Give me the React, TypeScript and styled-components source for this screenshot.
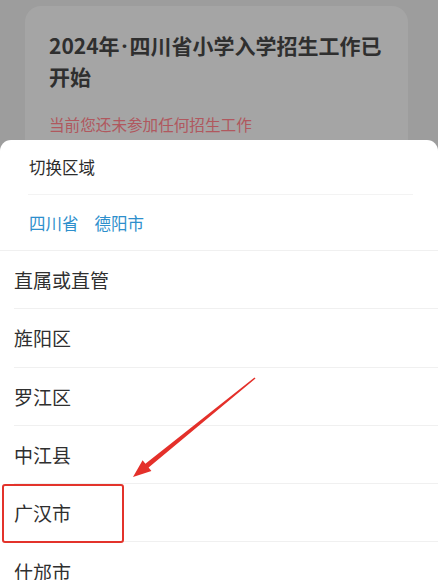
import React from "react";
import styled, { createGlobalStyle } from "styled-components";

const Global = createGlobalStyle`
  html, body { margin: 0; padding: 0; }
  body { font-family: "Noto Sans CJK SC", "Noto Sans", sans-serif; }
  * { box-sizing: border-box; }
`;

const Page = styled.div`
  position: relative;
  width: 438px;
  height: 580px;
  overflow: hidden;
  background: #9d9d9d;
  padding: 6px 30px 0 25px;
`;

const Card = styled.div`
  background: #a5a5a5;
  border-radius: 16px;
  padding: 24px 10px 20px 24px;
  height: 200px;
`;

const CardTitle = styled.h1`
  margin: 0;
  font-size: 21px;
  line-height: 30px;
  font-weight: 700;
  color: #2f2f2f;
  white-space: nowrap;
`;

const Dot = styled.span`
  font-family: "Noto Sans", sans-serif;
  padding: 0 2px;
`;

const CardNote = styled.p`
  margin: 21px 0 0;
  font-size: 15.6px;
  line-height: 24px;
  color: #b0585e;
  white-space: nowrap;
`;

const Sheet = styled.div`
  position: absolute;
  top: 140px;
  left: 0;
  right: 0;
  bottom: 0;
  background: #ffffff;
  border-radius: 11px 11px 0 0;
  display: flex;
  flex-direction: column;
`;

const SheetHead = styled.div`
  padding: 0 25px 0 28px;
  border-bottom: 1px solid #f0f0f0;
`;

const SheetTitle = styled.div`
  height: 55px;
  display: flex;
  align-items: center;
  padding-left: 1px;
  font-size: 16.5px;
  color: #2c2c2c;
  border-bottom: 1px solid #f3f3f3;
`;

const Crumbs = styled.div`
  height: 55px;
  display: flex;
  align-items: center;
  gap: 16px;
  padding-left: 1px;
  font-size: 16.5px;
  color: #2e8fcc;
`;

const List = styled.div`
  display: flex;
  flex-direction: column;
  padding-left: 14px;
`;

const Item = styled.div<{ $last?: boolean }>`
  height: 58.3px;
  flex: none;
  display: flex;
  align-items: center;
  font-size: 19px;
  color: #2f2f2f;
  border-bottom: ${(p) => (p.$last ? "none" : "1px solid #f0f0f0")};
`;

const Highlight = styled.div`
  position: absolute;
  left: 2px;
  top: 484px;
  width: 122px;
  height: 59px;
  border: 2px solid #e3332b;
  border-radius: 3px;
  pointer-events: none;
`;

const Overlay = styled.svg`
  position: absolute;
  left: 0;
  top: 0;
  width: 438px;
  height: 580px;
  pointer-events: none;
`;

const items = ["直属或直管", "旌阳区", "罗江区", "中江县", "广汉市", "什邡市"];

export default function App() {
  return (
    <>
      <Global />
      <Page>
        <Card>
          <CardTitle>
            2024年<Dot>·</Dot>四川省小学入学招生工作已
            <br />
            开始
          </CardTitle>
          <CardNote>当前您还未参加任何招生工作</CardNote>
        </Card>
        <Sheet>
          <SheetHead>
            <SheetTitle>切换区域</SheetTitle>
            <Crumbs>
              <span>四川省</span>
              <span>德阳市</span>
            </Crumbs>
          </SheetHead>
          <List>
            {items.map((t, i) => (
              <Item key={t} $last={i === items.length - 1}>
                {t}
              </Item>
            ))}
          </List>
        </Sheet>
        <Highlight />
        <Overlay viewBox="0 0 438 580">
          <polygon
            points="133,477 151.4,471.1 148.6,467.6 255.5,378.6 254.5,377.4 145.4,463.8 142.6,460.3"
            fill="#e4302a"
          />
        </Overlay>
      </Page>
    </>
  );
}
